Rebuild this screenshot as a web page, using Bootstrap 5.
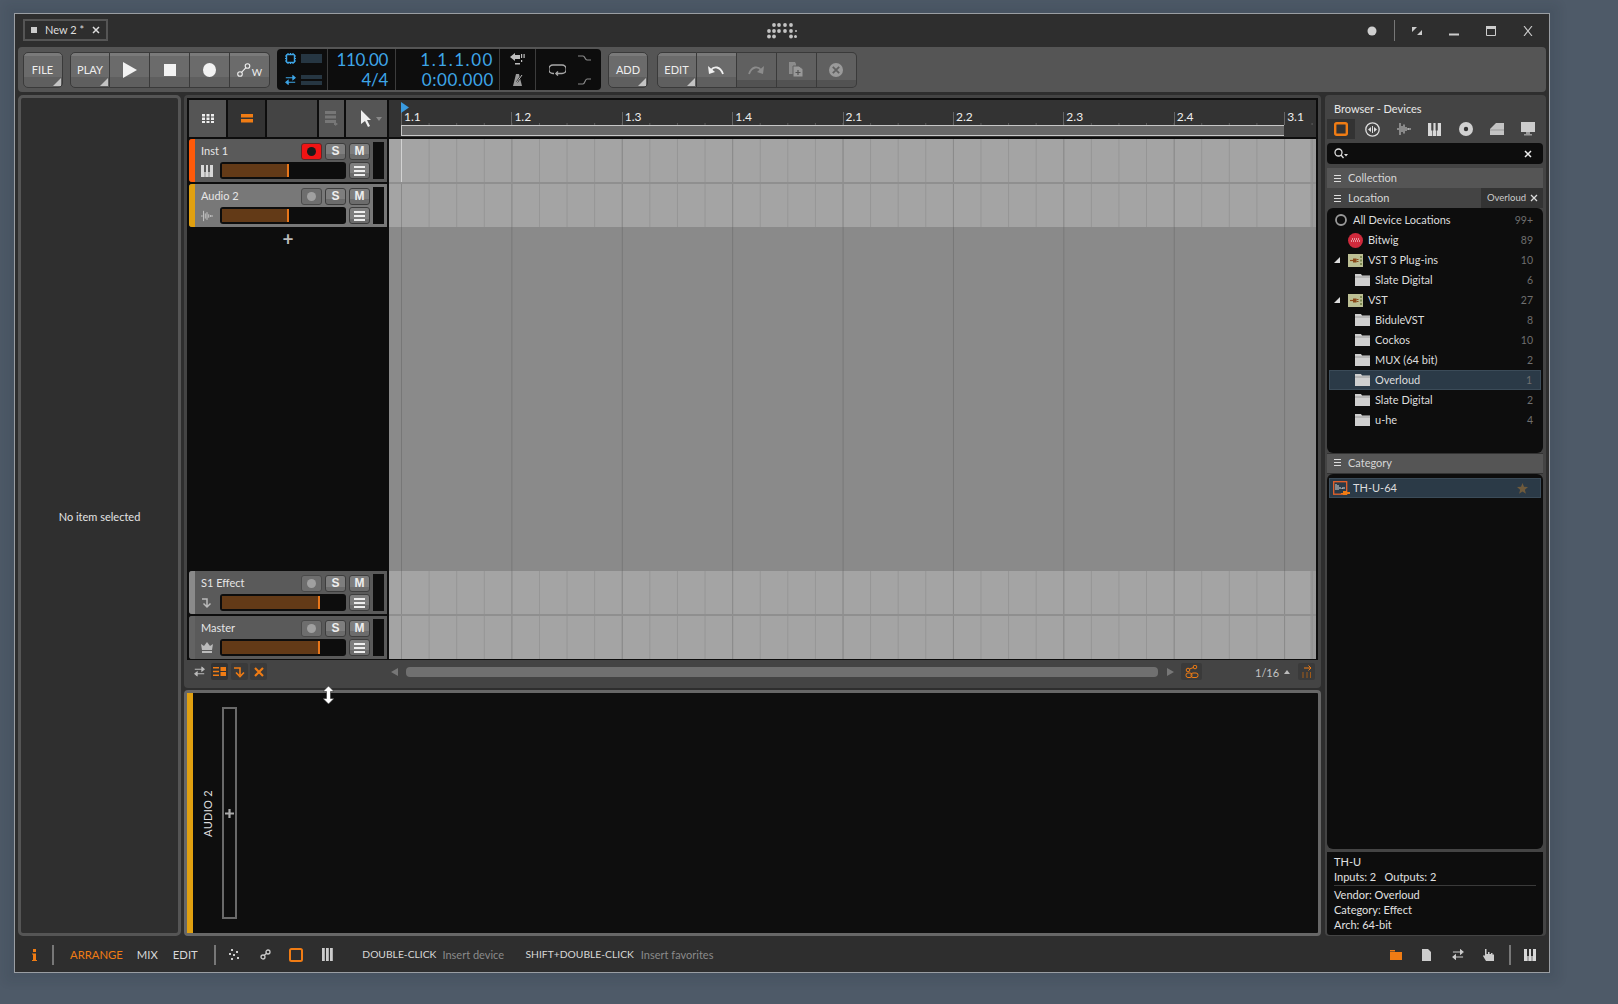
<!DOCTYPE html>
<html lang="en">
<head>
<meta charset="utf-8">
<title>Bitwig Studio</title>
<link rel="stylesheet" href="https://cdn.jsdelivr.net/npm/bootstrap@5.3.0/dist/css/bootstrap.min.css">
<style>
html,body{height:100%;}
body{background:#4e5a68;font-family:"Lato","Liberation Sans",sans-serif;font-size:11px;color:#d8d8d8;line-height:1.2;overflow:hidden;}
svg{display:block;flex:none;}
.app-win{width:1536px;height:960px;margin:13px 0 0 14px;background:#2e2e2e;border:1px solid #9a9ea3;box-shadow:0 0 9px 9px rgba(20,30,40,.09);}
.title-bar{height:33px;flex:none;}
.title-side{flex:1 1 0;}
.doc-tab{width:85px;height:22px;border:2px solid #555;padding:0 6px 0 6px;font-size:11px;color:#ddd;margin:-1px 0 0 8px;}
.doc-sq{width:6px;height:6px;background:#ccc;margin-right:8px;}
.win-ctl{color:#ccc;}
.win-rule{width:1px;height:21px;background:#777;margin:0 17px;}
.tool-bar{height:45px;flex:none;margin:0 3px;background:#555;border-radius:4px;padding-left:4.5px;}
.btn-group>.btn.tb{flex:0 0 40px;margin-left:0 !important;border-radius:0 !important;}
.btn.tb{width:40px;height:36px;padding:0;border:1px solid #3a3a3a;border-left-width:0;color:#eee;font-size:11px;background:linear-gradient(#7a7a7a 0 3px,#6b6b6b 3px 72%,#5f5f5f 72%);display:flex;align-items:center;justify-content:center;position:relative;}
.btn-group>.btn.tb:first-child{border-left-width:1px;border-radius:5px 0 0 5px !important;}
.btn-group>.btn.tb:last-child{border-radius:0 5px 5px 0 !important;}
.btn-group>.btn.tb.solo{border-radius:5px !important;border-left-width:1px;}
.btn.tb.dim{background:linear-gradient(#606060 0 80%,#525252 80%);}
.btn.tb.crn::after{content:"";position:absolute;right:1px;bottom:1px;border-style:solid;border-width:0 0 8px 8px;border-color:transparent transparent #c4c4c4 transparent;}
.tb-gap1{margin-right:7.5px;}
.tb-lbl{padding-top:2px;}
.tp-box{height:41px;background:#0d0d0d;border-radius:4px;width:324px;margin:0 7px 0 7px;color:#3ea6e8;}
.tp-cell{height:100%;border-right:1px solid #3c3c3c;}
.tp-cell:last-child{border-right:0;}
.tp-a{width:51px;padding:4px 0 4px 8px;}
.tp-b{width:68px;padding-right:7px;}
.tp-c{width:104px;padding-right:5px;}
.tp-d{width:36px;}
.tp-e{width:65px;}
.tp-num{font-size:17px;line-height:20px;text-align:right;letter-spacing:-.3px;}
.tp-c .tp-num{letter-spacing:1.55px;}
.tp-c .tp-num.tight{letter-spacing:.6px;}
.mtr1{width:21px;height:9px;background:#263642;}
.mtr2{width:21px;height:10px;background:linear-gradient(#263642 0 4px,#0d0d0d 4px 6px,#263642 6px);}
.main-area{min-height:0;margin:3px 3px 0 3px;height:841px;flex:none;}
.insp-pane{width:163px;flex:none;border:3px solid #555;border-radius:5px;background:#2f2f2f;margin-right:3px;color:#e4e4e4;padding-top:2px;}
.mid-col{width:1137px;flex:none;margin-right:4px;}
.arr-pane{height:593px;flex:none;background:#444;border-radius:4px;padding:3px 3px 0 3px;}
.arr-body{height:562px;background:#0d0d0d;padding:2px 2px 1px 2px;}
.arr-left{width:198px;flex:none;margin-right:2px;}
.arr-right{flex:1 1 0;min-width:0;position:relative;}
.hd-row{height:37px;flex:none;margin-bottom:2px;}
.hd-cell{height:100%;background:#555;}
.hd-a{width:37px;margin-right:2px;}
.hd-b{width:37px;margin-right:2px;background:#333;}
.hd-c{width:50px;margin-right:2px;background:#444;}
.hd-d{width:25px;margin-right:2px;}
.hd-e{flex:1 1 0;}
.trk{height:43px;flex:none;background:#5a5a5a;border-radius:3px 0 0 3px;}
.trk.sel{background:#787878;}
.trk-gap{margin-bottom:2px;}
.trk-strip{width:6px;flex:none;border-radius:3px 0 0 3px;}
.trk-main{flex:1 1 0;padding:4px 0 0 6px;}
.trk-name{flex:1 1 0;color:#e6e6e6;font-size:11px;}
.trk-r1{height:16px;margin-bottom:3px;}
.trk-r2{height:17px;}
.mini{width:21px;height:17px;padding:0;border-radius:3px;border:1px solid #3d3d3d;font-family:"Liberation Sans",sans-serif;font-weight:700;font-size:12px;line-height:1;color:#eee;background:linear-gradient(#7e7e7e 0 70%,#6c6c6c 70%);display:flex;align-items:center;justify-content:center;margin-left:3px;}
.mini.off{background:#6e6e6e;border-color:#4a4a4a;}
.mini.red{background:#f01414;border-color:#5a2a2a;}
.rec-dot{width:9px;height:9px;border-radius:50%;background:#1a1a1a;}
.rec-off{width:9px;height:9px;border-radius:50%;background:#a0a0a0;}
.trk-ico{width:12px;margin-right:7px;}
.fader{width:126px;height:17px;background:#0d0d0d;border-radius:3px;padding:2px;}
.fader-fill{height:100%;background:#633a17;border-right:2px solid #e8761a;}
.f-a{width:67px;}
.f-b{width:98px;}
.vu-col{width:11px;flex:none;height:37px;background:#0d0d0d;margin:3px 3px 0 3px;}
.add-zone{flex:1 1 0;color:#bbb;padding-top:4px;text-align:center;font-size:19px;line-height:16px;font-weight:700;}
.tl-head{height:37px;flex:none;background:#333;margin-bottom:2px;padding-left:12px;}
.tl-marks{height:25px;background-image:linear-gradient(90deg,#5c5c5c 1px,transparent 1px);background-size:27.6px 2px;background-repeat:repeat-x;background-position:0 100%;}
.tl-beat{width:110.4px;flex:none;height:100%;padding:10px 0 0 3px;color:#eee;font-size:12px;line-height:14px;background:linear-gradient(90deg,#666 1px,transparent 1px);background-size:1px 13px;background-repeat:no-repeat;background-position:0 100%;}
.tl-loop{height:11px;width:883px;background:#686868;border:1px solid #c8c8c8;border-right:0;}
.play-flag{position:absolute;left:12px;top:2px;}
.lane{height:43px;flex:none;background-color:#a4a4a4;background-image:linear-gradient(90deg,transparent calc(100% - 6px),rgba(0,0,0,.06) calc(100% - 6px)),linear-gradient(90deg,#8a8a8a 1px,transparent 1px),linear-gradient(90deg,#959595 1px,transparent 1px);background-size:100% 100%,110.4px 100%,27.6px 100%;background-position:0 0,12px 0,12px 0;position:relative;}
.lane-sep{height:2px;flex:none;background:#8f8f8f;}
.lane-void{flex:1 1 0;background-color:#8a8a8a;background-image:linear-gradient(90deg,#777 1px,transparent 1px);background-size:110.4px 100%;background-position:12px 0;}
.play-line{position:absolute;left:12px;top:0;bottom:0;width:1px;background:#d2d2d2;}
.arr-foot{height:27px;flex:none;padding:3px 0 0 7px;color:#bbb;}
.ft-box{width:17px;height:17px;background:#3a3a3a;border-radius:2px;display:flex;align-items:center;justify-content:center;margin-left:2.5px;}
.scroll-bar{height:10px;width:752px;background:#707070;border-radius:4px;margin:4px 9px 0 7px;}
.snap-val{color:#c4c4c4;font-size:11px;}
.dev-pane{height:246px;flex:none;margin-top:2px;border:3px solid #676767;border-radius:4px;background:#0e0e0e;position:relative;}
.dev-strip{width:6px;flex:none;background:#e0a010;}
.dev-name{width:29px;flex:none;font-size:11px;color:#ddd;letter-spacing:.3px;}
.dev-name span{writing-mode:vertical-rl;transform:rotate(180deg);}
.dev-slot{width:15px;height:212px;margin-top:14px;border:2px solid #696969;color:#999;}
.brw-pane{width:221px;flex:none;background:#444;border-radius:4px;padding:0 3px 2px 2px;}
.brw-title{height:24px;flex:none;padding:7px 0 0 7px;color:#e8e8e8;}
.brw-tabs{height:20px;flex:none;margin-bottom:4px;}
.brw-tab{width:31px;height:20px;display:flex;align-items:center;justify-content:center;}
.brw-tab.on{width:28px;background:#333;margin-right:2px;}
.brw-search{height:21px;flex:none;background:#0d0d0d;border-radius:4px;margin-bottom:4px;padding:0 11px 0 7px;color:#ddd;}
.sec-hd{height:20px;flex:none;padding-left:7px;color:#d6d6d6;background:#555;font-size:11px;}
.sec-hd.alt{background:#444;}
.sec-burger{width:7px;height:7px;margin-right:7px;background:linear-gradient(#ddd 0 1px,transparent 1px 3px,#ddd 3px 4px,transparent 4px 6px,#ddd 6px 7px);}
.sec-chip{width:62px;height:100%;background:#333;font-size:9.5px;padding:0 0 0 6px;color:#ccc;}
.brw-list{background:#0d0d0d;height:245px;flex:none;padding-top:2px;}
.list-group-item.brw-row{height:20px;background:transparent;border:0;padding:0 10px 0 9px;color:#ddd;font-size:11px;border-radius:0;}
.brw-row .cnt{margin-left:auto;color:#6f6f6f;font-size:10.5px;}
.list-group-item.brw-row.picked{background:#2b3a47;border:1px solid #3b4b58;margin:0 2px;padding:0 8px 0 6px;}
.list-group-item.brw-row.indent-0{padding-left:6px;}
.list-group-item.brw-row.indent-1{padding-left:21px;}
.list-group-item.brw-row.indent-2{padding-left:28px;}
.list-group-item.brw-row.indent-t{padding-left:7px;}
.list-group-item.brw-row.picked.indent-p{padding-left:25px;}
.list-group-item.brw-row.picked.indent-c{padding-left:3px;}
.row-tri{width:0;height:0;border-style:solid;border-width:0 0 6px 6px;border-color:transparent transparent #ddd transparent;margin-right:8px;}
.cat-hd{height:21px;flex:none;background:#555;border-top:1px solid #333;border-bottom:1px solid #333;padding:0 0 2px 7px;color:#d6d6d6;}
.cat-list{background:#0d0d0d;height:375px;flex:none;padding-top:4px;}
.info-pane{background:#0d0d0d;margin-top:3px;height:83px;flex:none;padding:2px 7px 0 7px;color:#e2e2e2;border-radius:0 0 3px 3px;line-height:15px;}
.info-rule{height:1px;background:#3a3a3a;margin:1px 0 1px;}
.stat-bar{height:36px;flex:none;padding:1px 0 0 17px;font-size:11px;color:#d8d8d8;}
.stat-rule{width:2px;height:20px;background:#777;}
.stat-cap{font-size:10.3px;}
.stat-main{font-size:11.3px;}
.c-org{color:#f07c14;}
.c-dim{color:#8a8a8a;}
.drag-cur{position:absolute;left:322.5px;top:686px;z-index:3;}
</style>
</head>
<body>
<svg width="0" height="0" style="position:absolute">
<defs>
<symbol id="folder" viewBox="0 0 15 12"><path d="M0 0h6l1 1.500h8V12H0z" fill="#cfcfcf"/><path d="M0 3h15" stroke="#8d8d8d" stroke-width=".8"/></symbol>
<symbol id="vstico" viewBox="0 0 15 13"><rect width="15" height="13" fill="#bcbf94"/><path d="M2 6.500h3" stroke="#8a4a1c" stroke-width="1.200"/><path d="M5 4.500h3.500v4H5z" fill="#8a4a1c"/><path d="M8.500 5.500h2M8.500 7.500h2" stroke="#8a4a1c"/><path d="M12 2h2v2h-2zM12 5.500h2v2h-2zM12 9h2v2h-2z" fill="#7d8a52"/></symbol>
<symbol id="piano" viewBox="0 0 12 12"><path d="M0 0h3v7h.7v5H0zM5 0h2v7h.7v5H4.300V7H5zM9 0h3v12H8.300V7H9z" fill="#d8d8d8"/></symbol>
<symbol id="wave" viewBox="0 0 14 14"><path d="M0 7h2M3 1v12M5 4v6M7 2.500v9M9 5v4M11 6v2M11 7h3" stroke="#d0d0d0" stroke-width="1" fill="none"/></symbol>
<symbol id="slide" viewBox="0 0 14 13"><path d="M1 3.500h9M10 1l3 2.500-3 2.500zM13 9.500H4M4 7L1 9.500 4 12z" stroke="currentColor" stroke-width="1.300" fill="currentColor"/></symbol>
</defs>
</svg>
<div class="app-win d-flex flex-column">
  <div class="title-bar d-flex align-items-center">
    <div class="title-side d-flex">
      <div class="doc-tab d-flex align-items-center"><span class="doc-sq"></span><span>New 2 *</span><svg class="ms-auto" width="8" height="8" viewBox="0 0 8 8"><path d="M1 1l6 6M7 1L1 7" stroke="#ddd" stroke-width="1.500"/></svg></div>
    </div>
    <svg width="30" height="18" viewBox="0 0 30 18" fill="#c4c4c4"><circle cx="7" cy="3" r="1.900"/><circle cx="12" cy="3" r="1.900"/><circle cx="18" cy="3" r="1.900"/><circle cx="24" cy="3" r="1.900"/><circle cx="2" cy="9" r="1.900"/><circle cx="7" cy="9" r="1.900"/><circle cx="12" cy="9" r="1.900"/><circle cx="18" cy="9" r="1.900"/><circle cx="24" cy="9" r="1.900"/><circle cx="29" cy="9" r="1"/><circle cx="2" cy="14.500" r="1.900"/><circle cx="7" cy="14.500" r="1.900"/><circle cx="24" cy="14.500" r="1.900"/><circle cx="28.500" cy="14.500" r="1.500"/></svg>
    <div class="title-side d-flex align-items-center justify-content-end win-ctl">
      <svg width="10" height="10" viewBox="0 0 10 10"><circle cx="5" cy="5" r="4.500" fill="#cfcfcf"/></svg>
      <span class="win-rule"></span>
      <svg width="10" height="10" viewBox="0 0 10 10" fill="#ccc"><path d="M0 1h5L0 6zM10 9H5l5-5z"/></svg>
      <svg style="margin-left:27px" width="10" height="10" viewBox="0 0 10 10" fill="#ccc"><path d="M0 7.500h10v2H0z"/></svg>
      <svg style="margin-left:27px" width="10" height="10" viewBox="0 0 10 10"><path d="M.5.500h9v9h-9z" fill="none" stroke="#ccc"/><path d="M0 0h10v3H0z" fill="#ccc"/></svg>
      <svg style="margin-left:27px;margin-right:16px" width="10" height="10" viewBox="0 0 10 10"><path d="M1 0l8 10M9 0L1 10" stroke="#ccc" stroke-width="1.100"/></svg>
    </div>
  </div>
  <div class="tool-bar d-flex align-items-center">
    <div class="btn-group tb-gap1"><button class="btn tb solo crn" type="button"><span class="tb-lbl">FILE</span></button></div>
    <div class="btn-group">
      <button class="btn tb crn" type="button"><span class="tb-lbl">PLAY</span></button>
      <button class="btn tb" type="button"><svg width="14" height="16" viewBox="0 0 14 16"><path d="M0 0l14 8-14 8z" fill="#f2f2f2"/></svg></button>
      <button class="btn tb" type="button"><svg width="12" height="12" viewBox="0 0 12 12"><path d="M0 0h12v12H0z" fill="#f2f2f2"/></svg></button>
      <button class="btn tb" type="button"><svg width="13" height="14" viewBox="0 0 13 14"><ellipse cx="6.500" cy="7" rx="6.500" ry="7" fill="#f2f2f2"/></svg></button>
      <button class="btn tb" type="button"><svg width="14" height="14" viewBox="0 0 14 14" fill="none" stroke="#eee" stroke-width="1.100"><circle cx="3" cy="11" r="2.300"/><circle cx="10.500" cy="3" r="2.300"/><path d="M4.500 9.300l4.500-4.700"/></svg><span style="font-size:10px;margin:5px 0 0 1px">W</span></button>
    </div>
    <div class="tp-box d-flex">
      <div class="tp-cell tp-a d-flex flex-column justify-content-between">
        <div class="d-flex align-items-center"><svg width="11" height="11" viewBox="0 0 11 11" style="margin-right:5px" fill="none" stroke="#3ea6e8"><rect x="1.500" y="1.500" width="8" height="8" rx="1" stroke-width="1.400"/><path d="M3 0v1M5.500 0v1M8 0v1M3 10v1M5.500 10v1M8 10v1M0 3h1M0 5.500h1M0 8h1M10 3h1M10 5.500h1M10 8h1"/></svg><span class="mtr1"></span></div>
        <div class="d-flex align-items-center"><svg width="11" height="12" viewBox="0 0 14 13" style="margin-right:5px;color:#3ea6e8"><use href="#slide"/></svg><span class="mtr2"></span></div>
      </div>
      <div class="tp-cell tp-b d-flex flex-column justify-content-center"><div class="tp-num">110.00</div><div class="tp-num">4/4</div></div>
      <div class="tp-cell tp-c d-flex flex-column justify-content-center"><div class="tp-num">1.1.1.00</div><div class="tp-num tight">0:00.000</div></div>
      <div class="tp-cell tp-d d-flex flex-column align-items-center justify-content-center gap-2">
        <svg width="15" height="13" viewBox="0 0 15 13" fill="#bdbdbd"><path d="M0 4l5-4v2h5v4H5v2z"/><path d="M11 1h1.200v4H11zM13.500 1h1.200v4h-1.200zM11 7h1.200v2H11zM5 10h5v1.500H5z"/></svg>
        <svg width="12" height="12" viewBox="0 0 12 12"><path d="M4 0h3l3 12H1z" fill="#9a9a9a"/><path d="M5 8l5-7" stroke="#0d0d0d" stroke-width="2"/><path d="M5 8l5-7" stroke="#bbb"/></svg>
      </div>
      <div class="tp-cell tp-e d-flex align-items-center">
        <svg style="margin-left:13px" width="17" height="13" viewBox="0 0 17 13" fill="none" stroke="#a8a8a8" stroke-width="1.500"><path d="M5 10.500H4A3.300 3.300 0 0 1 4 2h9a3.300 3.300 0 0 1 0 8.500H7"/><path d="M9 8.500L7 10.500l2 2"/></svg>
        <div class="ms-auto d-flex flex-column gap-3" style="margin-right:10px"><svg width="13" height="7" viewBox="0 0 13 7" fill="none" stroke="#8a8a8a" stroke-width="1.200"><path d="M0 1h5c2 0 2 4 4 4h4"/></svg><svg width="13" height="7" viewBox="0 0 13 7" fill="none" stroke="#8a8a8a" stroke-width="1.200"><path d="M0 6h5c2 0 2-5 4-5h4"/></svg></div>
      </div>
    </div>
    <div class="btn-group tb-gap1"><button class="btn tb solo crn" type="button"><span class="tb-lbl">ADD</span></button></div>
    <div class="btn-group" style="margin-left:1px">
      <button class="btn tb crn" type="button"><span class="tb-lbl">EDIT</span></button>
      <button class="btn tb" type="button"><svg width="16" height="10" viewBox="0 0 16 10" fill="none"><path d="M15 9C12 1 6 1 3 5" stroke="#f0f0f0" stroke-width="1.800"/><path d="M0 1l1 8 6-2z" fill="#f0f0f0"/></svg></button>
      <button class="btn tb dim" type="button"><svg width="16" height="10" viewBox="0 0 16 10" fill="none"><path d="M1 9C4 1 10 1 13 5" stroke="#8c8c8c" stroke-width="1.800"/><path d="M16 1l-1 8-6-2z" fill="#8c8c8c"/></svg></button>
      <button class="btn tb dim" type="button"><svg width="14" height="15" viewBox="0 0 14 15"><path d="M0 0h6l1 2v10H0z" fill="#8c8c8c"/><path d="M4 4h6l4 3v8H4z" fill="#999" stroke="#606060"/><path d="M9 8v5M6.500 10.500h5" stroke="#555" stroke-width="1.200"/></svg></button>
      <button class="btn tb dim" type="button"><svg width="14" height="14" viewBox="0 0 14 14"><circle cx="7" cy="7" r="7" fill="#9a9a9a"/><path d="M3.800 3.800l6.400 6.400M10.200 3.800l-6.400 6.400" stroke="#606060" stroke-width="1.800"/></svg></button>
    </div>
  </div>
  <div class="main-area d-flex">
    <div class="insp-pane d-flex align-items-center justify-content-center">No item selected</div>
    <div class="mid-col d-flex flex-column">
      <div class="arr-pane d-flex flex-column">
        <div class="arr-body d-flex">
          <div class="arr-left d-flex flex-column">
            <div class="hd-row d-flex">
              <div class="hd-cell hd-a d-flex align-items-center justify-content-center"><svg width="12" height="9" viewBox="0 0 12 9" fill="#eee"><path d="M0 0h3v2.500H0zM4.500 0h3v2.500h-3zM9 0h3v2.500H9zM0 3.500h3V6H0zM4.500 3.500h3V6h-3zM9 3.500h3V6H9zM0 7h3v2H0zM4.500 7h3v2h-3zM9 7h3v2H9z"/></svg></div>
              <div class="hd-cell hd-b d-flex align-items-center justify-content-center"><svg width="12" height="9" viewBox="0 0 12 9" fill="#f07c14"><path d="M0 0h12v3.500H0zM0 5h12v3.500H0z"/></svg></div>
              <div class="hd-cell hd-c"></div>
              <div class="hd-cell hd-d d-flex align-items-center justify-content-center"><svg width="13" height="15" viewBox="0 0 13 15" fill="#777"><path d="M0 0h11v3H0zM0 4.500h11v3H0zM0 9h11v3H0zM9 12h1v-1l3 2-3 2v-1H9z"/></svg></div>
              <div class="hd-cell hd-e d-flex align-items-center"><svg style="margin-left:15px" width="11" height="17" viewBox="0 0 11 17"><path d="M0 0l10 10H6l3 6-2 1-3-6-4 3z" fill="#eee"/></svg><svg style="margin-left:4px" width="6" height="4" viewBox="0 0 6 4"><path d="M0 0h6L3 4z" fill="#888"/></svg></div>
            </div>
            <div class="trk trk-gap d-flex">
              <span class="trk-strip" style="background:#ff5a0a"></span>
              <div class="trk-main">
                <div class="trk-r1 d-flex align-items-center"><span class="trk-name">Inst 1</span><span class="mini red"><span class="rec-dot"></span></span><span class="mini">S</span><span class="mini">M</span></div>
                <div class="trk-r2 d-flex align-items-center"><svg class="trk-ico" width="12" height="12"><use href="#piano"/></svg><div class="fader"><div class="fader-fill f-a"></div></div><span class="mini"><svg width="11" height="10" viewBox="0 0 11 10" fill="#eee"><path d="M0 0h11v2H0zM0 4h11v2H0zM0 8h11v2H0z"/></svg></span></div>
              </div>
              <span class="vu-col"></span>
            </div>
            <div class="trk sel d-flex">
              <span class="trk-strip" style="background:#e0a010"></span>
              <div class="trk-main">
                <div class="trk-r1 d-flex align-items-center"><span class="trk-name">Audio 2</span><span class="mini off"><span class="rec-off"></span></span><span class="mini">S</span><span class="mini">M</span></div>
                <div class="trk-r2 d-flex align-items-center"><svg class="trk-ico" width="12" height="12"><use href="#wave"/></svg><div class="fader"><div class="fader-fill f-a"></div></div><span class="mini"><svg width="11" height="10" viewBox="0 0 11 10" fill="#eee"><path d="M0 0h11v2H0zM0 4h11v2H0zM0 8h11v2H0z"/></svg></span></div>
              </div>
              <span class="vu-col"></span>
            </div>
            <div class="add-zone">+</div>
            <div class="trk trk-gap d-flex">
              <span class="trk-strip" style="background:#8a8a8a"></span>
              <div class="trk-main">
                <div class="trk-r1 d-flex align-items-center"><span class="trk-name">S1 Effect</span><span class="mini off"><span class="rec-off"></span></span><span class="mini">S</span><span class="mini">M</span></div>
                <div class="trk-r2 d-flex align-items-center"><svg class="trk-ico" width="12" height="12" viewBox="0 0 12 12" fill="none" stroke="#bbb" stroke-width="1.500"><path d="M1 2h5v7M2.500 6.500L6 10l3.500-3.500"/></svg><div class="fader"><div class="fader-fill f-b"></div></div><span class="mini"><svg width="11" height="10" viewBox="0 0 11 10" fill="#eee"><path d="M0 0h11v2H0zM0 4h11v2H0zM0 8h11v2H0z"/></svg></span></div>
              </div>
              <span class="vu-col"></span>
            </div>
            <div class="trk d-flex">
              <span class="trk-strip" style="background:#636363"></span>
              <div class="trk-main">
                <div class="trk-r1 d-flex align-items-center"><span class="trk-name">Master</span><span class="mini off"><span class="rec-off"></span></span><span class="mini">S</span><span class="mini">M</span></div>
                <div class="trk-r2 d-flex align-items-center"><svg class="trk-ico" width="12" height="11" viewBox="0 0 12 11" fill="#bbb"><path d="M0 2l3 2 3-4 3 4 3-2-1 6H1zM1 9h10v2H1z"/></svg><div class="fader"><div class="fader-fill f-b"></div></div><span class="mini"><svg width="11" height="10" viewBox="0 0 11 10" fill="#eee"><path d="M0 0h11v2H0zM0 4h11v2H0zM0 8h11v2H0z"/></svg></span></div>
              </div>
              <span class="vu-col"></span>
            </div>
          </div>
          <div class="arr-right d-flex flex-column">
            <div class="tl-head">
              <div class="tl-marks d-flex">
                <span class="tl-beat">1.1</span><span class="tl-beat">1.2</span><span class="tl-beat">1.3</span><span class="tl-beat">1.4</span><span class="tl-beat">2.1</span><span class="tl-beat">2.2</span><span class="tl-beat">2.3</span><span class="tl-beat">2.4</span><span class="tl-beat">3.1</span>
              </div>
              <div class="tl-loop"></div>
            </div>
            <svg class="play-flag" width="8" height="11" viewBox="0 0 8 11"><path d="M0 0l8 5.500L0 11z" fill="#3a9be0"/></svg>
            <div class="lane"><span class="play-line"></span></div>
            <div class="lane-sep"></div>
            <div class="lane"></div>
            <div class="lane-void"></div>
            <div class="lane"></div>
            <div class="lane-sep"></div>
            <div class="lane"></div>
          </div>
        </div>
        <div class="arr-foot d-flex align-items-start">
          <svg style="margin:3px 6px 0 0;color:#bbb" width="11" height="11" viewBox="0 0 14 13"><use href="#slide"/></svg>
          <span class="ft-box" style="margin-left:0;background:#333"><svg width="13" height="9" viewBox="0 0 13 9" fill="#f07c14"><path d="M0 0h6v1.500H0zM0 3.700h6v1.500H0zM0 7.500h6V9H0zM7.500 0H13v4H7.500zM7.500 5H13v4H7.500z"/></svg></span>
          <span class="ft-box"><svg width="12" height="12" viewBox="0 0 12 12" fill="none" stroke="#f07c14" stroke-width="1.600"><path d="M1 2h6v7M3 6.500L7 10.500l4-4"/></svg></span>
          <span class="ft-box"><svg width="10" height="10" viewBox="0 0 10 10" stroke="#f07c14" stroke-width="2.200"><path d="M1 1l8 8M9 1L1 9"/></svg></span>
          <svg style="margin:5px 0 0 124px" width="7" height="8" viewBox="0 0 7 8"><path d="M7 0v8L0 4z" fill="#777"/></svg>
          <div class="scroll-bar" style="margin-left:8px"></div>
          <svg style="margin:5px 0 0 0" width="7" height="8" viewBox="0 0 7 8"><path d="M0 0v8l7-4z" fill="#777"/></svg>
          <span class="ft-box" style="width:21px;margin-left:7px"><svg width="14" height="14" viewBox="0 0 14 14" fill="none" stroke="#f07c14"><circle cx="3" cy="5" r="1.800"/><circle cx="10" cy="2" r="1.800"/><path d="M4.500 4l4-1.500"/><rect x="1" y="8" width="6" height="4.500" rx="2"/><rect x="6" y="8" width="7" height="4.500" rx="2"/></svg></span>
          <span class="snap-val" style="margin:3px 0 0 53px">1/16</span>
          <svg style="margin:7px 0 0 5px" width="6" height="4" viewBox="0 0 6 4"><path d="M3 0l3 4H0z" fill="#bbb"/></svg>
          <span class="ft-box" style="margin-left:8px"><svg width="11" height="13" viewBox="0 0 11 13" fill="none" stroke="#f07c14"><path d="M3 3h7M7.500 0.500L10 3l-2.500 2.500"/><path d="M2 7v6M6 7v6M9.500 7v6" stroke="#a05a18"/></svg></span>
        </div>
      </div>
      <div class="dev-pane d-flex">
        <span class="dev-strip"></span>
        <div class="dev-name d-flex align-items-center justify-content-center"><span>AUDIO 2</span></div>
        <div class="dev-slot d-flex align-items-center justify-content-center"><svg width="11" height="11" viewBox="0 0 11 11"><path d="M5.500 1v9M1 5.500h9" stroke="#aaa" stroke-width="2.200"/></svg></div>
      </div>
    </div>
    <div class="brw-pane d-flex flex-column">
      <div class="brw-title">Browser - Devices</div>
      <div class="brw-tabs d-flex align-items-center">
        <span class="brw-tab on"><svg width="14" height="14" viewBox="0 0 14 14" fill="none"><rect x="1.200" y="1.200" width="11.600" height="11.600" rx="1.500" stroke="#f07c14" stroke-width="2.400"/></svg></span>
        <span class="brw-tab"><svg width="15" height="15" viewBox="0 0 15 15" fill="none" stroke="#ddd"><circle cx="7.500" cy="7.500" r="6.700" stroke-width="1.300"/><path d="M3 7.500l3-2.500v5zM12 7.500L9 5v5z" fill="#ddd" stroke="none"/><path d="M7.500 4v7"/></svg></span>
        <span class="brw-tab"><svg width="14" height="14"><use href="#wave"/></svg></span>
        <span class="brw-tab"><svg width="13" height="13"><use href="#piano"/></svg></span>
        <span class="brw-tab"><svg width="14" height="14" viewBox="0 0 14 14"><circle cx="7" cy="7" r="7" fill="#d0d0d0"/><circle cx="7" cy="7" r="2.200" fill="#333"/></svg></span>
        <span class="brw-tab"><svg width="14" height="13" viewBox="0 0 14 13"><path d="M0 12V6L6 0h8v12z" fill="#c4c4c4"/><path d="M0 7h14" stroke="#999"/></svg></span>
        <span class="brw-tab"><svg width="14" height="14" viewBox="0 0 14 14"><rect width="14" height="10" fill="#ccc"/><path d="M5 10h4v2H5zM3 12h8v1.500H3z" fill="#999"/></svg></span>
      </div>
      <div class="brw-search d-flex align-items-center"><svg width="14" height="11" viewBox="0 0 14 11" fill="none" stroke="#ddd" stroke-width="1.300"><circle cx="4.500" cy="4.500" r="3.500"/><path d="M7 7l2.500 3"/><path d="M10 6h4l-2 2.500z" fill="#ddd" stroke="none"/></svg><svg class="ms-auto" width="8" height="8" viewBox="0 0 8 8"><path d="M1 1l6 6M7 1L1 7" stroke="#eee" stroke-width="1.500"/></svg></div>
      <div class="sec-hd d-flex align-items-center"><span class="sec-burger"></span>Collection</div>
      <div class="sec-hd alt d-flex align-items-center"><span class="sec-burger"></span>Location<div class="sec-chip ms-auto d-flex align-items-center">Overloud<svg class="ms-auto" style="margin-right:5px" width="8" height="8" viewBox="0 0 8 8"><path d="M1 1l6 6M7 1L1 7" stroke="#ddd" stroke-width="1.300"/></svg></div></div>
      <ul class="brw-list list-group">
        <li class="list-group-item brw-row indent-0 d-flex align-items-center"><svg style="margin-left:2px;margin-right:6px" width="12" height="12" viewBox="0 0 12 12" fill="none"><circle cx="6" cy="6" r="5" stroke="#999" stroke-width="1.800"/></svg>All Device Locations<span class="cnt">99+</span></li>
        <li class="list-group-item brw-row indent-1 d-flex align-items-center"><svg style="margin-right:5px" width="15" height="15" viewBox="0 0 15 15"><circle cx="7.500" cy="7.500" r="7.500" fill="#cf2a3c"/><path d="M4 6h1M6 6h1M8 6h1M10 6h1M3 8h1M5 8h1M7 8h1M9 8h1M11 8h1" stroke="#fff" stroke-width="1.200"/></svg>Bitwig<span class="cnt">89</span></li>
        <li class="list-group-item brw-row indent-t d-flex align-items-center"><span class="row-tri"></span><svg style="margin-right:5px" width="15" height="13"><use href="#vstico"/></svg>VST 3 Plug-ins<span class="cnt">10</span></li>
        <li class="list-group-item brw-row indent-2 d-flex align-items-center"><svg style="margin-right:5px" width="15" height="12"><use href="#folder"/></svg>Slate Digital<span class="cnt">6</span></li>
        <li class="list-group-item brw-row indent-t d-flex align-items-center"><span class="row-tri"></span><svg style="margin-right:5px" width="15" height="13"><use href="#vstico"/></svg>VST<span class="cnt">27</span></li>
        <li class="list-group-item brw-row indent-2 d-flex align-items-center"><svg style="margin-right:5px" width="15" height="12"><use href="#folder"/></svg>BiduleVST<span class="cnt">8</span></li>
        <li class="list-group-item brw-row indent-2 d-flex align-items-center"><svg style="margin-right:5px" width="15" height="12"><use href="#folder"/></svg>Cockos<span class="cnt">10</span></li>
        <li class="list-group-item brw-row indent-2 d-flex align-items-center"><svg style="margin-right:5px" width="15" height="12"><use href="#folder"/></svg>MUX (64 bit)<span class="cnt">2</span></li>
        <li class="list-group-item brw-row picked indent-p d-flex align-items-center"><svg style="margin-right:5px" width="15" height="12"><use href="#folder"/></svg>Overloud<span class="cnt">1</span></li>
        <li class="list-group-item brw-row indent-2 d-flex align-items-center"><svg style="margin-right:5px" width="15" height="12"><use href="#folder"/></svg>Slate Digital<span class="cnt">2</span></li>
        <li class="list-group-item brw-row indent-2 d-flex align-items-center"><svg style="margin-right:5px" width="15" height="12"><use href="#folder"/></svg>u-he<span class="cnt">4</span></li>
      </ul>
      <div class="cat-hd d-flex align-items-center"><span class="sec-burger"></span>Category</div>
      <ul class="cat-list list-group">
        <li class="list-group-item brw-row picked indent-c d-flex align-items-center"><svg style="margin-right:3px" width="17" height="15" viewBox="0 0 17 15" fill="none"><rect x=".7" y=".7" width="13" height="12.500" stroke="#e8632a" stroke-width="1.300"/><path d="M3 9V3M5 9V4M7 8V6M9 8V7h3" stroke="#d8d8d8"/><path d="M8 12h2v-2h4v1h3v2h-3v1h-4v-1H8z" fill="#f07c14"/></svg>TH-U-64<svg style="margin-left:auto;margin-right:4px" width="11" height="11" viewBox="0 0 11 11"><path d="M5.500 0l1.500 3.800 4 .3-3.100 2.600 1 4-3.400-2.200-3.400 2.200 1-4L0 4.100l4-.3z" fill="#6e5a3c"/></svg></li>
      </ul>
      <div class="info-pane">
        <div>TH-U</div>
        <div>Inputs: 2 &nbsp; Outputs: 2</div>
        <div class="info-rule"></div>
        <div>Vendor: Overloud</div>
        <div>Category: Effect</div>
        <div>Arch: 64-bit</div>
      </div>
    </div>
  </div>
  <div class="stat-bar d-flex align-items-center">
    <svg width="5" height="12" viewBox="0 0 5 12" fill="#f07c14"><path d="M1 0h3v3H1zM0 4.500h4V11h1v1H0v-1h1V5.500H0z"/></svg>
    <span class="stat-rule" style="margin:0 16px 0 15px"></span>
    <span class="c-org stat-main">ARRANGE</span>
    <span class="stat-main" style="margin-left:14px">MIX</span>
    <span class="stat-main" style="margin-left:15px">EDIT</span>
    <span class="stat-rule" style="margin:0 13px 0 16px"></span>
    <svg width="11" height="11" viewBox="0 0 11 11" fill="#ccc"><path d="M2 0h2v2H2zM7 2h2v2H7zM0 4h2v2H0zM4 5h2v2H4zM2 9h2v2H2zM8 8h2v2H8z"/></svg>
    <svg style="margin-left:20px" width="11" height="11" viewBox="0 0 11 11" fill="none" stroke="#ccc" stroke-width="1.300"><circle cx="3" cy="8" r="2"/><circle cx="8" cy="3" r="2"/><path d="M4 6.500l3-2.500"/></svg>
    <svg style="margin-left:18.5px" width="14" height="14" viewBox="0 0 14 14" fill="none"><rect x="1" y="1" width="12" height="12" rx="1.500" stroke="#f07c14" stroke-width="2"/></svg>
    <svg style="margin-left:18.500px" width="11" height="13" viewBox="0 0 11 13" fill="#ccc"><path d="M0 0h2.800v13H0zM4 0h2.800v13H4zM8 0h2.800v13H8z"/></svg>
    <span class="stat-cap" style="margin-left:29.500px">DOUBLE-CLICK</span>
    <span class="c-dim" style="margin-left:6px">Insert device</span>
    <span class="stat-cap" style="margin-left:21.500px">SHIFT+DOUBLE-CLICK</span>
    <span class="c-dim" style="margin-left:7px">Insert favorites</span>
    <div class="ms-auto d-flex align-items-center">
      <svg width="12" height="10" viewBox="0 0 12 10" fill="#f07c14"><path d="M0 0h5v1.500H0zM0 2h12v8H0z"/></svg>
      <svg style="margin-left:20px" width="9" height="12" viewBox="0 0 9 12" fill="#ccc"><path d="M0 0h6l3 3v9H0z"/></svg>
      <svg style="margin-left:21px;color:#ccc" width="12" height="11" viewBox="0 0 14 13"><use href="#slide"/></svg>
      <svg style="margin-left:19px" width="11" height="12" viewBox="0 0 11 12" fill="#ccc"><path d="M2 0h1.500v5H5V3h1.500v2H8V4h1.500v1.500H11V12H3L0 7l1-1 1 1z"/></svg>
      <span class="stat-rule" style="margin:0 13px 0 15px"></span>
      <svg style="margin-right:13px" width="12" height="12"><use href="#piano"/></svg>
    </div>
  </div>
</div>
<svg class="drag-cur" width="11" height="18" viewBox="0 0 11 18"><path d="M5.500 0L11 5.500H7.500v7H11L5.500 18 0 12.500h3.500v-7H0z" fill="#fff" stroke="#333" stroke-width=".6"/></svg>
<script src="https://cdn.jsdelivr.net/npm/bootstrap@5.3.0/dist/js/bootstrap.bundle.min.js"></script>
</body>
</html>
